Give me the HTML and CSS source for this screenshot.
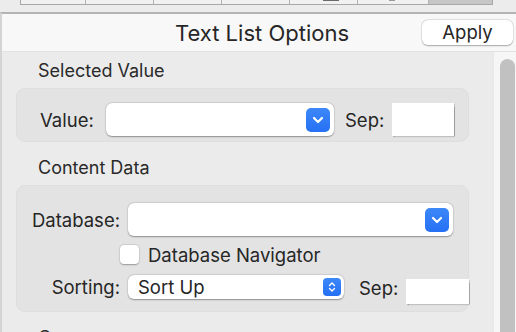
FILE: index.html
```html
<!DOCTYPE html>
<html>
<head>
<meta charset="utf-8">
<link rel="stylesheet" href="styles.css">
</head>
<body>
<div class="window">
  <div class="toolbar">
    <div class="cells">
      <div class="cell c1"></div>
      <div class="cell c2"></div>
      <div class="cell c3"></div>
      <div class="cell c4"></div>
      <div class="cell c5"><span class="mark m5"></span></div>
      <div class="cell c6"><span class="mark m6"></span></div>
      <div class="cell c7 active"></div>
    </div>
  </div>
  <div class="panel">
    <header class="titlebar">
      <span class="title">Text List Options</span>
      <button class="apply">Apply</button>
    </header>
    <div class="body">
      <div class="content">
        <div class="section-title">Selected Value</div>
        <div class="group g1">
          <div class="row">
            <span class="label vlabel">Value:</span>
            <div class="select s-value"><span class="popbtn"><svg width="12" height="8" viewBox="0 0 12 8"><path d="M2 2 L6 6 L10 2" fill="none" stroke="#fff" stroke-width="2.2" stroke-linecap="round" stroke-linejoin="round"/></svg></span></div>
            <span class="label sep">Sep:</span>
            <div class="input i1"></div>
          </div>
        </div>
        <div class="section-title">Content Data</div>
        <div class="group g2">
          <div class="row r-db">
            <span class="label rlabel">Database:</span>
            <div class="select s-db"><span class="popbtn"><svg width="12" height="8" viewBox="0 0 12 8"><path d="M2 2 L6 6 L10 2" fill="none" stroke="#fff" stroke-width="2.2" stroke-linecap="round" stroke-linejoin="round"/></svg></span></div>
          </div>
          <div class="row r-check">
            <span class="checkbox"></span>
            <span class="label">Database Navigator</span>
          </div>
          <div class="row r-sort">
            <span class="label rlabel">Sorting:</span>
            <div class="select s-sort"><span class="selval">Sort Up</span><span class="stepbtn"><svg width="8" height="12" viewBox="0 0 8 12"><path d="M1.5 4.5 L4 2 L6.5 4.5 M1.5 7.5 L4 10 L6.5 7.5" fill="none" stroke="#fff" stroke-width="1.4" stroke-linecap="round" stroke-linejoin="round"/></svg></span></div>
            <span class="label sep2">Sep:</span>
            <div class="input i2"></div>
          </div>
        </div>
        <div class="section-title">Query</div>
      </div>
      <div class="scrollbar"><div class="thumb"></div></div>
    </div>
  </div>
</div>
</body>
</html>
```
FILE: styles.css
```css
* { box-sizing: border-box; }
html, body { margin: 0; padding: 0; }
body {
  width: 516px;
  height: 332px;
  overflow: hidden;
  background: #ebebeb;
  font-family: Inter, "Noto Sans", sans-serif;
  color: #262626;
}
.window { display: flex; flex-direction: column; height: 332px; overflow: hidden; }
.toolbar {
  height: 12px;
  background: #ececec;
  flex: none;
}
.cells {
  display: flex;
  margin-left: 20px;
  width: 473px;
  height: 5px;
  border-left: 1px solid #a9a9a9;
  border-right: 1px solid #a9a9a9;
  border-bottom: 1px solid #a9a9a9;
}
.cell {
  background: #f1f1f1;
  border-right: 1px solid #b2b2b2;
  position: relative;
}
.cell:last-child { border-right: none; }
.c1 { width: 65px; }
.c2 { width: 68px; }
.c3 { width: 68px; }
.c4 { width: 68px; }
.c5 { width: 68px; }
.c6 { width: 71px; }
.c7 { flex: 1; }
.cell.active { background: #c6c6c6; }
.mark { position: absolute; top: 0; height: 1px; background: #6a6a6a; }
.m5 { left: 33px; width: 16px; }
.m6 { left: 31px; width: 6px; background: #9a9a9a; }

.panel {
  flex: 1;
  display: flex;
  flex-direction: column;
  border-top: 2px solid #b4b4b4;
  border-left: 2px solid #d4d4d4;
  min-height: 0;
}
.titlebar {
  height: 38px;
  flex: none;
  background: #f8f8f8;
  border-bottom: 1px solid #e2e2e2;
  display: grid;
  grid-template-columns: 1fr auto 1fr;
  align-items: center;
  padding-left: 6px;
}
.title {
  grid-column: 2;
  font-size: 22px;
  letter-spacing: 0;
  color: #262626;
}
.apply {
  grid-column: 3;
  justify-self: end;
  margin-right: 3px;
  width: 91px;
  height: 25px;
  border: none;
  border-radius: 6px;
  background: #fff;
  box-shadow: 0 0.5px 1.5px rgba(0,0,0,0.3), 0 0 0 0.5px rgba(0,0,0,0.08);
  font-family: inherit;
  font-size: 18.5px;
  color: #262626;
  padding: 0;
  line-height: 25px;
}
.body {
  flex: 1;
  display: flex;
  min-height: 0;
}
.content {
  flex: 1;
  padding-left: 14px;
  padding-right: 24px;
}
.scrollbar {
  width: 23px;
  flex: none;
  background: #f6f6f6;
  border-left: 1px solid #e8e8e8;
  padding: 7px 1px 0 6px;
}
.thumb {
  height: 400px;
  background: #c1c1c1;
  border-radius: 8px;
}
.section-title {
  padding: 9px 0 7px 22px;
  height: 36px;
  line-height: 20px;
  font-size: 18px;
  color: #2a2a2a;
}
.group {
  width: 453px;
  background: #e3e3e3;
  border: 1px solid #dedede;
  border-radius: 9px;
  margin-bottom: 7px;
}
.g1 { height: 54px; padding: 14px 0 0 23px; }
.g2 { height: 127px; padding: 17px 0 0 14px; display: flex; flex-direction: column; }
.row { display: flex; align-items: center; }
.row > * { flex: none; }
.label { font-size: 18.5px; color: #262626; white-space: nowrap; }
.vlabel { width: 52px; }
.select {
  position: relative;
  background: #fff;
  border-radius: 6px;
  box-shadow: 0 0.5px 1.5px rgba(0,0,0,0.35), 0 0 0 0.5px rgba(0,0,0,0.06);
  display: flex;
  align-items: center;
  justify-content: flex-end;
}
.s-value { width: 228px; height: 33px; margin-left: 14px; padding-right: 4px; }
.popbtn {
  width: 24px;
  height: 24px;
  border-radius: 5px;
  background: linear-gradient(#3c88f8, #2670f4);
  display: flex;
  align-items: center;
  justify-content: center;
}
.sep { margin-left: 11px; width: 38px; }
.input {
  background: #fff;
  box-shadow: 0.5px 1px 1px rgba(0,0,0,0.3);
}
.i1 { width: 62px; height: 33px; margin-left: 9px; }
.rlabel { width: 89px; text-align: right; }
.r-db { height: 33px; }
.s-db { width: 325px; height: 33px; margin-left: 8px; padding-right: 4px; }
.r-check { height: 19px; margin-top: 9px; padding-left: 89px; }
.checkbox {
  width: 19px;
  height: 19px;
  background: #fff;
  border-radius: 4px;
  box-shadow: 0 0.5px 1.5px rgba(0,0,0,0.3), 0 0 0 0.5px rgba(0,0,0,0.08);
  margin-right: 9px;
}
.r-sort { margin-top: 11px; align-items: flex-start; }
.r-sort .label { line-height: 24px; }
.s-sort { width: 216px; height: 24px; margin-left: 8px; padding: 0 3px 0 10px; justify-content: space-between; }
.selval { font-size: 18.5px; color: #262626; }
.stepbtn {
  width: 18px;
  height: 18px;
  border-radius: 4px;
  background: linear-gradient(#3c88f8, #2670f4);
  display: flex;
  align-items: center;
  justify-content: center;
}
.sep2 { margin-left: 15px; margin-top: 1px; width: 38px; }
.i2 { width: 63px; height: 25px; margin-left: 9px; margin-top: 4px; }
```
